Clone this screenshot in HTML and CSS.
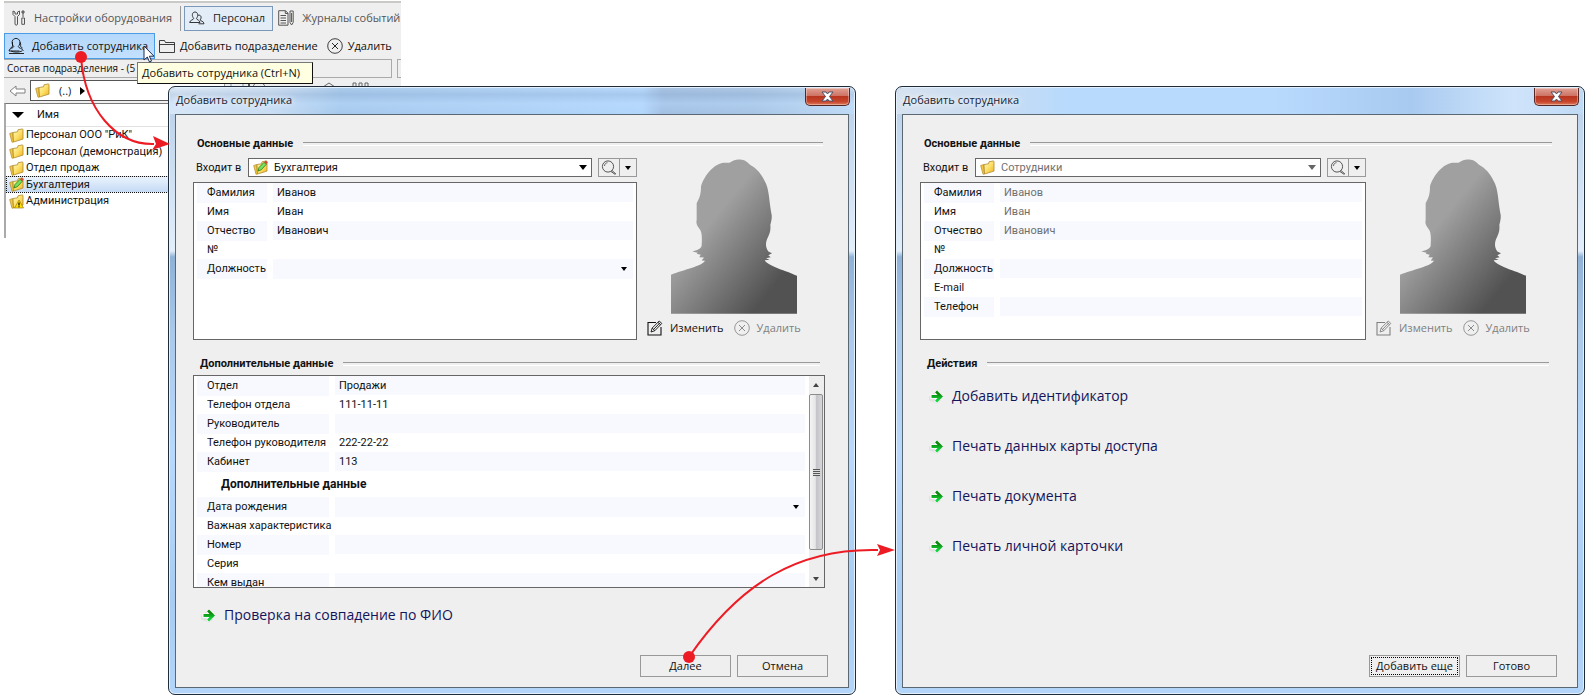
FILE: index.html
```html
<!DOCTYPE html>
<html lang="ru">
<head>
<meta charset="utf-8">
<title>Добавить сотрудника</title>
<link rel="stylesheet" href="styles.css">
</head>
<body>
<svg class="defs" aria-hidden="true">
  <defs>
    <linearGradient id="gold" x1="0" y1="0" x2="1" y2="1"><stop offset="0" stop-color="#fffac0"/><stop offset=".5" stop-color="#fde06a"/><stop offset="1" stop-color="#ecb21c"/></linearGradient>
    <linearGradient id="shade" x1="0" y1="0" x2="1" y2="1"><stop offset=".36" stop-color="#a0a0a0"/><stop offset=".82" stop-color="#525252"/></linearGradient>
    <linearGradient id="green" x1="0" y1="0" x2="0" y2="1"><stop offset=".3" stop-color="#0d8a0d"/><stop offset=".8" stop-color="#12d43c"/></linearGradient>
  </defs>
  <symbol id="folder" viewBox="0 0 15 15">
    <path d="M.7 5.500l3-1 .8 9.500-1.500.3z" fill="#f5c93a" stroke="#b08a30" stroke-width=".7"/>
    <path d="M4 4.500l4.500-.7.500-2 4.500-.9.500 1v9.200L4.500 14z" fill="url(#gold)" stroke="#b08a30" stroke-width=".8" stroke-linejoin="round"/>
  </symbol>
  <symbol id="folder-edit" viewBox="0 0 15 15">
    <use href="#folder"/>
    <path d="M5 11l1-3.500L11 2.300l2.300 2L8.300 9.700z" fill="#7be060" stroke="#207c18" stroke-width=".8"/>
    <path d="M11 2.300L12.800.5l2 1.800-1.500 2z" fill="#d84a3a"/>
  </symbol>
  <symbol id="folder-warn" viewBox="0 0 15 15">
    <use href="#folder"/>
    <path d="M10 6l4.500 8h-9z" fill="#ffe000" stroke="#8c6a00" stroke-width=".6"/>
    <path d="M10 8.500v3M10 12.300v1" stroke="#000" stroke-width="1.200"/>
  </symbol>
  <symbol id="cross" viewBox="0 0 16 16">
    <g fill="none" stroke="currentColor"><circle cx="8" cy="8" r="7.300" stroke-width=".8"/><path d="M5 5l6 6M11 5l-6 6" stroke-width=".9"/></g>
  </symbol>
  <symbol id="edit" viewBox="0 0 16 16">
    <g fill="none" stroke="currentColor"><path d="M9 2.500H1v12.500h13V7" stroke-width="1.100"/><path d="M4 12l1.200-4 7-7 2.600 2.400-7 7.300zM5.200 8l2.600 2.700M6.500 9.500l6.500-6.700M11 2.300l2.600 2.500" stroke-width=".9"/></g>
  </symbol>
  <symbol id="person" viewBox="0 0 18 18">
    <g fill="none" stroke="currentColor" stroke-width=".9"><path d="M5.800 9.500C4.200 8 4 6 4.200 4.300 5 .5 11 .5 11.800 4.300c.3 1.700 0 3.700-1.500 5.200"/><path d="M5.800 9.500C5.600 11.500 1 10.800 1 14h10.500M4.500 5v4.500L2.500 11M11.800 5c1 1 1 3 .7 4.500l2 1.500M10.300 9.500c0 2 4.500 1.500 5 4.500M1 16.500h15M3 14c3 1.500 8 1.500 11 0"/></g>
  </symbol>
  <symbol id="people" viewBox="0 0 16 14">
    <g fill="none" stroke="currentColor" stroke-width=".9"><path d="M.7 11.500c0-2.500 4-2.500 4-4.200C2.500 5 3 1 6 1s3.500 4 1.500 6.300c0 1.700 3.500 1.700 3.500 4.200z"/><path d="M9 4.200c3-.6 4 2.300 2.200 4.700 0 1.300 3.800 1 3.800 3.900H9.500"/></g>
  </symbol>
  <symbol id="tools" viewBox="0 0 14 16">
    <g fill="none" stroke="currentColor" stroke-width="1"><path d="M1 1v3.500l2 2V14c0 1.500 2.500 1.500 2.500 0V6.500l2-2V1L5.500 2v2H3V2z"/><path d="M11 1v6M9.800 8h2.700v6.300H9.800zM10 1h2v2h-2z"/></g>
  </symbol>
  <symbol id="journal" viewBox="0 0 16 16">
    <g fill="none" stroke="currentColor" stroke-width="1"><path d="M.7.700h6.800l2.500 2.500v12H.7zM7.300.7v2.800H10M2.500 5.500h5.500M2.500 8h5.500M2.500 10.500h5.500M2.500 13h5.500"/><path d="M12 1h3.200v11.500L13.600 15 12 12.500zM13.600 3v9"/></g>
  </symbol>
  <symbol id="folder-line" viewBox="0 0 16 13">
    <path d="M.5 12.500V.5h5l1 2h9v10zM.5 4.500h15" fill="none" stroke="currentColor" stroke-width=".8"/>
  </symbol>
  <symbol id="lens" viewBox="0 0 16 15">
    <g fill="none" stroke="currentColor"><circle cx="7" cy="6.500" r="5.600" stroke-width=".9"/><path d="M3.500 6c0-2 1.500-3.200 3-3.300" stroke-width=".8"/><path d="M11 10.500l4 3.600M10 11.500l4.300 3" stroke-width=".9"/></g>
  </symbol>
  <symbol id="back" viewBox="0 0 17 12">
    <path d="M1 6l6-5v3h9v4H7v3z" fill="#fff" stroke="#808080"/>
  </symbol>
  <symbol id="go" viewBox="0 0 15 14">
    <path d="M0 11V7l7-5 5 9-4 3z" fill="#cfcfcf" opacity=".4"/>
    <path d="M1.500 4.800h5L5.500 2l2-1.500 7 6.500-7 6.500-2-1.500 1-2.800h-5z" fill="#fff"/>
    <path d="M2.500 5.600H8.500L6 2.700 8 1l6 6-6 6-2-1.700 2.500-2.900h-6z" fill="url(#green)"/>
  </symbol>
  <symbol id="silhouette" viewBox="483 238 378 464">
    <path fill="url(#shade)" d="M483 702V585C520 570 575 560 585 543L575 542 582 533 568 532 572 525 560 522 563 519 547 515C560 511 576 506 575 495 576 475 577 455 567 445 560 437 558 430 560 420V370C565 360 573 350 573 320 580 295 605 255 640 249 650 248 655 250 660 248 670 240 680 238 690 239 705 240 712 246 720 255 740 265 755 285 762 300 772 315 775 335 777 350 780 375 782 390 785 405 786 415 784 425 781 435 783 455 778 463 771 478 766 490 767 505 775 515L786 520 775 526 782 532 768 535 779 540 764 541C775 560 830 572 861 588V702Z"/>
  </symbol>
</svg>

<main class="desktop">
  <section class="app" aria-label="Персонал">
    <nav class="tabs">
      <button class="tab tab-dim"><svg class="ic-tools"><use href="#tools"/></svg>Настройки оборудования</button>
      <button class="tab tab-active"><svg class="ic-people"><use href="#people"/></svg>Персонал</button>
      <button class="tab tab-dim tab-last"><svg class="ic-journal"><use href="#journal"/></svg>Журналы событий</button>
    </nav>
    <div class="toolbar">
      <button class="tool tool-hot"><svg class="ic-person"><use href="#person"/></svg>Добавить сотрудника</button>
      <button class="tool"><svg class="ic-folder-line"><use href="#folder-line"/></svg>Добавить подразделение</button>
      <button class="tool"><svg class="ic-16"><use href="#cross"/></svg>Удалить</button>
    </div>
    <div class="captions"><div class="caption">Состав подразделения - (5</div><div class="caption-next"></div></div>
    <div class="path">
      <svg class="ic-back"><use href="#back"/></svg>
      <div class="crumbs"><svg class="ic-15"><use href="#folder"/></svg><span>(..)</span><i class="tri-right"></i></div>
      <svg class="view-icons" viewBox="0 0 150 20"><g fill="none" stroke="#666"><path d="M2 19V3q0-2 2-2h8q2 0 2 2v16" stroke="#6d9bd0"/><path d="M20 0v20" stroke-width="2" stroke="#555"/><circle cx="30" cy="7" r="6"/><path d="M91 8l9-6 9 6v8H91zM124 2h3v5h-3zM130 2h3v5h-3zM136 2h3v5h-3z"/></g></svg>
    </div>
    <div class="list">
      <div class="list-head"><i class="tri-down big"></i>Имя</div>
      <ul>
        <li><svg class="ic-15"><use href="#folder"/></svg>Персонал ООО "РиК"</li>
        <li><svg class="ic-15"><use href="#folder"/></svg>Персонал (демонстрация)</li>
        <li><svg class="ic-15"><use href="#folder"/></svg>Отдел продаж</li>
        <li class="selected"><svg class="ic-15"><use href="#folder-edit"/></svg>Бухгалтерия</li>
        <li><svg class="ic-15"><use href="#folder-warn"/></svg>Администрация</li>
      </ul>
    </div>
    <div class="tooltip" role="tooltip">Добавить сотрудника (Ctrl+N)</div>
  </section>

  <section class="dialog" aria-labelledby="t1">
    <header class="titlebar"><h1 id="t1">Добавить сотрудника</h1><button class="close" aria-label="Закрыть"><svg viewBox="0 0 13 11"><path d="M1 1h4l1.500 2L8 1h4L8.500 5.500 12 10H8L6.500 8 5 10H1l3.500-4.500z" fill="#fff" stroke="#4c4f66"/></svg></button></header>
    <form class="client">
      <h2>Основные данные</h2>
      <div class="person">
        <div class="main">
          <div class="belongs">
            <label for="dep1">Входит в</label>
            <div class="combo"><svg class="ic-15"><use href="#folder-edit"/></svg><select id="dep1"><option>Бухгалтерия</option></select><i class="tri-down"></i></div>
            <div class="search"><button type="button" aria-label="Найти"><svg class="ic-lens"><use href="#lens"/></svg></button><button type="button" aria-label="Варианты поиска"><i class="tri-down small"></i></button></div>
          </div>
          <div class="props props-short">
            <div class="prop"><label for="a1">Фамилия</label><input id="a1" value="Иванов"></div>
            <div class="prop"><label for="a2">Имя</label><input id="a2" value="Иван"></div>
            <div class="prop"><label for="a3">Отчество</label><input id="a3" value="Иванович"></div>
            <div class="prop"><label for="a4">№</label><input id="a4"></div>
            <div class="prop"><label for="a5">Должность</label><span class="pick"><select id="a5"><option></option></select><i class="tri-down small"></i></span></div>
          </div>
        </div>
        <div class="photo">
          <svg class="portrait" role="img" aria-label="Фото"><use href="#silhouette"/></svg>
          <div class="photo-actions">
            <button type="button"><svg class="ic-16"><use href="#edit"/></svg>Изменить</button>
            <button type="button" disabled><svg class="ic-16"><use href="#cross"/></svg>Удалить</button>
          </div>
        </div>
      </div>
      <h2 class="second">Дополнительные данные</h2>
      <div class="scrollbox">
        <div class="props props-long">
          <div class="prop"><label for="b1">Отдел</label><input id="b1" value="Продажи"></div>
          <div class="prop"><label for="b2">Телефон отдела</label><input id="b2" value="111-11-11"></div>
          <div class="prop"><label for="b3">Руководитель</label><input id="b3"></div>
          <div class="prop"><label for="b4">Телефон руководителя</label><input id="b4" value="222-22-22"></div>
          <div class="prop"><label for="b5">Кабинет</label><input id="b5" value="113"></div>
          <h3>Дополнительные данные</h3>
          <div class="prop"><label for="b6">Дата рождения</label><span class="pick"><select id="b6"><option></option></select><i class="tri-down small"></i></span></div>
          <div class="prop"><label for="b7">Важная характеристика</label><input id="b7"></div>
          <div class="prop"><label for="b8">Номер</label><input id="b8"></div>
          <div class="prop"><label for="b9">Серия</label><input id="b9"></div>
          <div class="prop"><label for="b10">Кем выдан</label><input id="b10"></div>
        </div>
        <div class="scrollbar"><i class="tri-up"></i><div class="thumb"><span></span></div><i class="tri-down tiny"></i></div>
      </div>
      <a class="go check" href="#check"><svg class="ic-15"><use href="#go"/></svg>Проверка на совпадение по ФИО</a>
      <footer><button type="button">Далее</button><button type="button">Отмена</button></footer>
    </form>
    <svg class="arrow-next" viewBox="0 0 216 130"><path d="M9 116C60 42 118 7 198 9" fill="none" stroke="#ed1c24" stroke-width="2"/><circle cx="9" cy="116" r="6" fill="#ed1c24"/><path d="M197 3l18 6-18 6 3-6z" fill="#ed1c24"/></svg>
  </section>

  <section class="dialog" aria-labelledby="t2">
    <header class="titlebar titlebar-light"><h1 id="t2">Добавить сотрудника</h1><button class="close" aria-label="Закрыть"><svg viewBox="0 0 13 11"><path d="M1 1h4l1.500 2L8 1h4L8.500 5.500 12 10H8L6.500 8 5 10H1l3.500-4.500z" fill="#fff" stroke="#4c4f66"/></svg></button></header>
    <form class="client">
      <h2>Основные данные</h2>
      <div class="person">
        <div class="main">
          <div class="belongs">
            <label for="dep2">Входит в</label>
            <div class="combo combo-off"><svg class="ic-15"><use href="#folder"/></svg><select id="dep2" disabled><option>Сотрудники</option></select><i class="tri-down"></i></div>
            <div class="search"><button type="button" aria-label="Найти"><svg class="ic-lens"><use href="#lens"/></svg></button><button type="button" aria-label="Варианты поиска"><i class="tri-down small"></i></button></div>
          </div>
          <div class="props props-short">
            <div class="prop"><label for="c1">Фамилия</label><input id="c1" value="Иванов" disabled></div>
            <div class="prop"><label for="c2">Имя</label><input id="c2" value="Иван" disabled></div>
            <div class="prop"><label for="c3">Отчество</label><input id="c3" value="Иванович" disabled></div>
            <div class="prop"><label for="c4">№</label><input id="c4" disabled></div>
            <div class="prop"><label for="c5">Должность</label><input id="c5" disabled></div>
            <div class="prop"><label for="c6">E-mail</label><input id="c6" disabled></div>
            <div class="prop"><label for="c7">Телефон</label><input id="c7" disabled></div>
          </div>
        </div>
        <div class="photo">
          <svg class="portrait" role="img" aria-label="Фото"><use href="#silhouette"/></svg>
          <div class="photo-actions">
            <button type="button" disabled><svg class="ic-16"><use href="#edit"/></svg>Изменить</button>
            <button type="button" disabled><svg class="ic-16"><use href="#cross"/></svg>Удалить</button>
          </div>
        </div>
      </div>
      <h2 class="second">Действия</h2>
      <div class="actions">
        <a class="go" href="#id"><svg class="ic-15"><use href="#go"/></svg>Добавить идентификатор</a>
        <a class="go" href="#card"><svg class="ic-15"><use href="#go"/></svg>Печать данных карты доступа</a>
        <a class="go" href="#doc"><svg class="ic-15"><use href="#go"/></svg>Печать документа</a>
        <a class="go" href="#personal"><svg class="ic-15"><use href="#go"/></svg>Печать личной карточки</a>
      </div>
      <footer><button type="button" class="focused">Добавить еще</button><button type="button">Готово</button></footer>
    </form>
  </section>

  <svg class="arrow-add" viewBox="0 0 100 100"><path d="M9 9C13 62 44 97 82 96" fill="none" stroke="#ed1c24" stroke-width="2"/><circle cx="9" cy="9" r="6" fill="#ed1c24"/><path d="M81 88l17 8-18 6 4-6z" fill="#ed1c24"/></svg>
  <svg class="cursor" viewBox="0 0 12 18"><path d="M1 1v14l3.300-3 2.200 5 2-.9-2.100-4.900H11z" fill="#fff" stroke="#222c50"/></svg>
</main>
</body>
</html>
```
FILE: styles.css
```css
* { box-sizing: border-box; }
body { margin: 0; background: #fff; color: #111; font: 11px/16px "Open Sans", "Noto Sans", sans-serif; }
button, input, select { font: inherit; color: inherit; margin: 0; padding: 0; border: 0; background: none; border-radius: 0; }
select { appearance: none; }
select:disabled, input:disabled { opacity: 1; color: #707070; }
h1, h2, h3, ul { margin: 0; padding: 0; }
svg { display: block; flex: none; overflow: visible; }
.defs { position: absolute; width: 0; height: 0; }

.ic-15 { width: 15px; height: 15px; }
.ic-16 { width: 16px; height: 16px; }
.ic-tools { width: 14px; height: 16px; }
.ic-people { width: 16px; height: 14px; }
.ic-journal { width: 16px; height: 16px; }
.ic-person { width: 18px; height: 18px; }
.ic-folder-line { width: 16px; height: 13px; }
.ic-lens { width: 16px; height: 15px; }
.ic-back { width: 17px; height: 12px; }

.tri-down, .tri-up, .tri-right { flex: none; width: 0; height: 0; border: 4px solid transparent; }
.tri-down { border-top: 5px solid #000; border-bottom: 0; }
.tri-down.big { border-width: 6px 6px 0; }
.tri-down.small { border-width: 4px 3px 0; }
.tri-down.tiny { border-width: 4px 3px 0; border-top-color: #444; }
.tri-up { border-width: 0 3px 4px; border-bottom-color: #444; }
.tri-right { border-width: 4px 0 4px 5px; border-left-color: #000; }

.desktop { position: relative; display: grid; grid-template-columns: 688fr 690fr; gap: 39px; min-height: 100vh; padding: 86px 3px 1px 168px; }

/* Main window */
.app { position: absolute; left: 4px; top: 1px; width: 397px; background: #efefef; }
.tabs { display: flex; align-items: center; height: 32px; border-top: 2px solid #c9c9c7; white-space: nowrap; }
.tab { display: flex; align-items: center; height: 25px; padding: 0 8px; gap: 8px; color: #222; }
.tab-dim { color: #555; }
.tab:first-child { border-right: 1px solid #999; margin-right: 3px; }
.tab-active { background: #e3edf8; border: 1px solid #7c98b8; padding: 0 7px 0 4px; }
.tab-last { padding: 0 0 0 5px; }
.toolbar { display: flex; align-items: center; height: 26px; white-space: nowrap; }
.tool { display: flex; align-items: center; gap: 5px; height: 26px; padding: 0 5px 0 4px; }
.tool-hot { gap: 6px; background: linear-gradient(#b5d8fb, #c3e0ff); border: 1px solid #4a9be8; padding: 0 6px 0 3px; }
.captions { display: flex; gap: 5px; height: 19px; overflow: hidden; }
.caption { flex: 1; border: 1px solid #aaa; border-left: 0; padding-left: 3px; font: 10px/17px "Open Sans", sans-serif; }
.caption-next { width: 4px; border: 1px solid #aaa; border-right: 0; }
.path { display: flex; align-items: center; height: 25px; padding-left: 5px; overflow: hidden; }
.crumbs { display: flex; align-items: center; width: 195px; height: 21px; margin-left: 4px; padding-left: 4px; gap: 9px; background: #fff; border: 1px solid #555; border-right-color: #999; }
.view-icons { width: 150px; height: 20px; margin-left: 4px; }
.list { min-height: 135px; background: #fff; border-top: 1px solid #777; border-left: 2px solid #aaa; font-family: Roboto, sans-serif; }
.list-head { display: flex; align-items: center; gap: 13px; height: 23px; padding-left: 6px; border-bottom: 1px solid #e2e2e2; }
.list ul { list-style: none; }
.list li { display: flex; align-items: center; gap: 2px; height: 17px; padding-left: 3px; }
.list li:nth-child(odd) { height: 16px; }
.list .selected { background: linear-gradient(#eaf3fd, #c4daf4); border: 1px dotted #111; padding-left: 2px; }
.tooltip { position: absolute; left: 133px; top: 61px; padding: 0 12px 1px 4px; background: #ffffe1; border: 1px solid #111; border-top-color: #777; border-left-color: #777; line-height: 19px; white-space: nowrap; }

/* Dialogs */
.dialog { position: relative; display: flex; flex-direction: column; min-width: 0; padding: 0 6px 6px; border: 1px solid #1f2d3a; border-radius: 7px; background: linear-gradient(#b8cfe8, #cfe0f3 15%, #e3eefa 27%, #8fb2d6 28%, #a9c8ea 40%, #b9d9fc 60%, #a8ccf2 85%, #b4d5fa); box-shadow: inset 0 0 0 1px #e4f1fd; }
.titlebar { display: flex; justify-content: space-between; height: 26px; margin: 1px -5px 0; padding: 0 4px 0 6px; border-radius: 6px 6px 0 0; background: linear-gradient(rgba(255,255,255,.1), rgba(150,180,215,.35) 25%, rgba(190,222,255,.4) 60%, rgba(190,222,255,.1)), linear-gradient(90deg, #dce8f5 0, #cadcf0 15%, #a3c6ea 25%, #b1d5fb 69%, #9fbcdf 72%, #a5c1e2 85%, #c0daf4); }
.titlebar-light { background: linear-gradient(90deg, #d6e2f0 0, #cadcf0 13%, #b8dafd 25%, #b8dafd 55%, #a9caf0 75%, #cfe4fb 90%, #c0daf4); }
h1 { font-size: 11px; line-height: 24px; font-weight: 400; color: #1a2430; text-shadow: 0 0 6px #fff, 0 0 8px #fff; }
.close { display: flex; justify-content: center; align-items: center; width: 45px; height: 18px; border: 1px solid #552826; border-top: 0; border-radius: 0 0 5px 5px; background: linear-gradient(#e0a295, #cf7465 45%, #b83520 50%, #c8452c 80%, #dc7a5c); box-shadow: inset 0 0 0 1px rgba(255,255,255,.35); }
.close svg { width: 13px; height: 11px; }
.client { flex: 1; display: flex; flex-direction: column; padding: 21px 20px 10px 17px; background: #efefef; border: 1px solid #5a6874; }
h2 { display: flex; align-items: center; gap: 10px; margin-right: 5px; padding-left: 4px; font: bold 11px/16px Roboto, sans-serif; }
h2::after { content: ""; flex: 1; height: 2px; border-top: 1px solid #999; border-bottom: 1px solid #fff; }
h2.second { margin: 16px 8px 0 0; padding-left: 7px; }
.person { display: grid; grid-template-columns: 1fr 178px; gap: 10px; margin-top: 6px; padding-right: 3px; }
.main { min-width: 0; }
.belongs { display: flex; align-items: center; padding-left: 3px; font-family: Roboto, sans-serif; }
.belongs label { flex: none; width: 52px; }
.combo { position: relative; flex: 1; display: flex; align-items: center; gap: 6px; height: 19px; padding: 0 4px; background: #fff; border: 1px solid #666; }
.combo select { flex: 1; height: 17px; }
.combo-off { color: #707070; }
.combo-off .tri-down { border-top-color: #666; }
.search { display: flex; margin-left: 6px; }
.search button { display: flex; align-items: center; justify-content: center; width: 22px; height: 19px; border: 1px solid #999; color: #444; }
.search button + button { width: 18px; margin-left: -1px; }
.props { background: #fff; font-family: Roboto, sans-serif; }
.props-short { min-height: 158px; margin-top: 5px; padding: 0 3px; border: 1px solid #666; }
.prop { display: grid; grid-template-columns: 70px 1fr; gap: 6px; height: 19px; line-height: 20px; }
.props-long .prop { grid-template-columns: 132px 1fr; }
.prop label { padding-left: 10px; white-space: nowrap; }
.prop input, .prop select { width: 100%; min-width: 0; height: 19px; padding: 1px 4px 0; }
.prop:nth-child(odd) > * { background: #f7f9ff; }
.pick { display: flex; align-items: center; padding-right: 6px; }
.photo-actions { display: flex; gap: 10px; margin-top: 6px; white-space: nowrap; }
.photo-actions button { display: flex; align-items: center; gap: 7px; }
.photo-actions button:disabled { color: #808080; }
.portrait { width: 126px; height: 155px; margin: 1px 0 0 24px; }
.scrollbox { display: flex; height: 213px; margin: 3px 3px 0 0; background: #fff; border: 1px solid #666; overflow: hidden; }
.props-long { flex: 1; padding: 0 4px 0 3px; overflow: hidden; }
h3 { height: 26px; padding-left: 24px; font: bold 12px/26px Roboto, sans-serif; }
.props-long h3 ~ .prop:nth-child(odd) > * { background: #f7f9ff; }
.scrollbar { display: flex; flex-direction: column; align-items: center; width: 15px; padding: 7px 1px 6px 0; background: #eee; }
.thumb { flex: 1; display: flex; align-items: center; justify-content: center; width: 14px; margin: 7px 0 27px; border: 1px solid #8c8c8c; border-radius: 2px; background: linear-gradient(90deg, #f4f4f4, #e6e6e8 45%, #c4c4c8 50%, #d6d6da); }
.thumb span { width: 7px; height: 7px; background: repeating-linear-gradient(#555 0 1px, #ddd 1px 2px); }
.go { display: flex; align-items: center; gap: 8px; padding-left: 8px; color: #14145a; font-size: 14px; line-height: 22px; text-decoration: none; }
.check { margin-top: 16px; }
.actions { display: grid; gap: 28px; margin-top: 13px; padding-left: 1px; }
footer { display: flex; justify-content: flex-end; gap: 6px; margin-top: auto; }
footer button { width: 91px; height: 22px; border: 1px solid #999; }
footer .focused { outline: 1px dotted #000; outline-offset: -3px; }

/* Callouts */
.arrow-add { position: absolute; left: 72px; top: 48px; width: 100px; height: 100px; pointer-events: none; }
.arrow-next { position: absolute; right: -41px; top: 454px; width: 216px; height: 130px; z-index: 2; pointer-events: none; }
.cursor { position: absolute; left: 143px; top: 45px; width: 12px; height: 18px; }
```
